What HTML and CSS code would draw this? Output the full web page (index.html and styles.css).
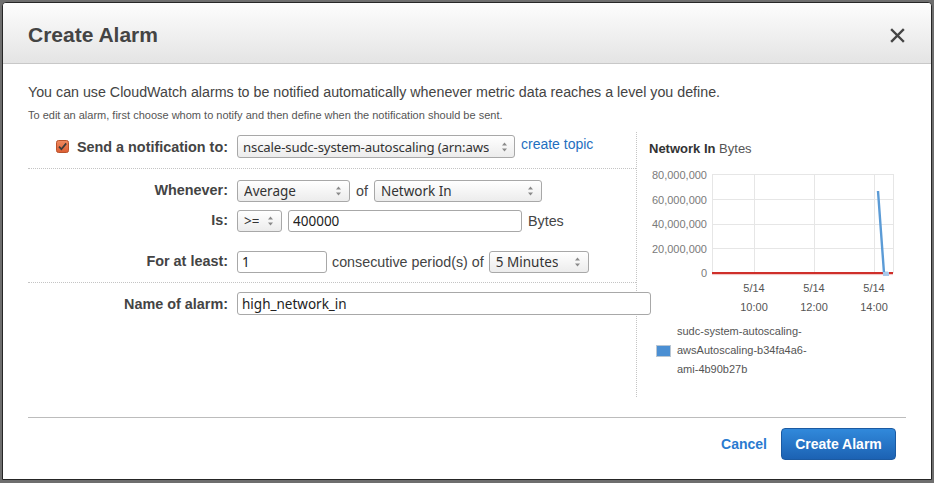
FILE: index.html
```html
<!DOCTYPE html>
<html lang="en">
<head>
<meta charset="utf-8">
<title>Create Alarm</title>
<link rel="stylesheet" href="styles.css">
</head>
<body>
<div class="modal">
  <header class="modal-header">
    <h1 class="modal-title">Create Alarm</h1>
    <button class="close" aria-label="Close">
      <svg width="15" height="15" viewBox="0 0 15 15"><path d="M2 2 L13 13 M13 2 L2 13" stroke="#444" stroke-width="2.4" stroke-linecap="square" fill="none"/></svg>
    </button>
  </header>

  <div class="modal-body">
    <p class="intro">You can use CloudWatch alarms to be notified automatically whenever metric data reaches a level you define.</p>
    <p class="hint">To edit an alarm, first choose whom to notify and then define when the notification should be sent.</p>

    <div class="editor">
      <div class="form-panel">
        <div class="row row-notify">
          <div class="label">
            <span class="checkbox">
              <svg width="13" height="13" viewBox="0 0 13 13">
                <defs><linearGradient id="cb" x1="0" y1="0" x2="0" y2="1"><stop offset="0" stop-color="#f08a5f"/><stop offset="1" stop-color="#dc5e33"/></linearGradient></defs>
                <rect x="0.5" y="0.5" width="12" height="12" rx="2" fill="url(#cb)" stroke="#b9532c"/>
                <path d="M3 6.6 L5.4 9.2 L10.2 3.4" stroke="#3b3b3b" stroke-width="1.7" fill="none"/>
              </svg>
            </span>
            <span>Send a notification to:</span>
          </div>
          <div class="controls">
            <div class="select w-topic"><span class="sel-text">nscale-sudc-system-autoscaling (arn:aws</span><svg class="spin" width="7" height="12" viewBox="0 0 7 12"><path d="M1 4.5 L3.5 1.5 L6 4.5 Z M1 7.5 L3.5 10.5 L6 7.5 Z" fill="#8a8a8a"/></svg></div>
            <a class="link" href="#">create topic</a>
          </div>
        </div>

        <div class="section section-cond">
          <div class="row">
            <div class="label lift">Whenever:</div>
            <div class="controls">
              <div class="select w-stat"><span class="sel-text">Average</span><svg class="spin" width="7" height="12" viewBox="0 0 7 12"><path d="M1 4.5 L3.5 1.5 L6 4.5 Z M1 7.5 L3.5 10.5 L6 7.5 Z" fill="#8a8a8a"/></svg></div>
              <span class="txt">of</span>
              <div class="select w-metric"><span class="sel-text">Network In</span><svg class="spin" width="7" height="12" viewBox="0 0 7 12"><path d="M1 4.5 L3.5 1.5 L6 4.5 Z M1 7.5 L3.5 10.5 L6 7.5 Z" fill="#8a8a8a"/></svg></div>
            </div>
          </div>
          <div class="row row-is">
            <div class="label lift">Is:</div>
            <div class="controls">
              <div class="select w-op"><span class="sel-text">&gt;=</span><svg class="spin" width="7" height="12" viewBox="0 0 7 12"><path d="M1 4.5 L3.5 1.5 L6 4.5 Z M1 7.5 L3.5 10.5 L6 7.5 Z" fill="#8a8a8a"/></svg></div>
              <input class="input w-threshold" type="text" value="400000">
              <span class="txt">Bytes</span>
            </div>
          </div>
          <div class="row row-period">
            <div class="label lift">For at least:</div>
            <div class="controls tight">
              <input class="input w-count" type="text" value="1">
              <span class="txt">consecutive period(s) of</span>
              <div class="select w-period"><span class="sel-text">5 Minutes</span><svg class="spin" width="7" height="12" viewBox="0 0 7 12"><path d="M1 4.5 L3.5 1.5 L6 4.5 Z M1 7.5 L3.5 10.5 L6 7.5 Z" fill="#8a8a8a"/></svg></div>
            </div>
          </div>
        </div>

        <div class="section section-name">
          <div class="row">
            <div class="label">Name of alarm:</div>
            <div class="controls">
              <input class="input w-name" type="text" value="high_network_in">
            </div>
          </div>
        </div>
      </div>

      <div class="chart-panel">
        <div class="chart-title"><b>Network In</b> <span>Bytes</span></div>
        <svg class="chart" width="270" height="160" viewBox="0 0 270 160">
          <g stroke="#e6e6e6" stroke-width="1" fill="none">
            <path d="M75 14.5 H256 M75 39.5 H256 M75 64.5 H256 M75 88.5 H256"/>
            <path d="M75.5 14 V113 M117.5 14 V113 M177.5 14 V113 M237.5 14 V113 M256.5 14 V113"/>
          </g>
          <g class="ylab" text-anchor="end">
            <text x="70" y="19">80,000,000</text>
            <text x="70" y="44">60,000,000</text>
            <text x="70" y="68">40,000,000</text>
            <text x="70" y="93">20,000,000</text>
            <text x="70" y="117">0</text>
          </g>
          <path d="M75 113 H256" stroke="#cf2f2a" stroke-width="2" fill="none"/>
          <path d="M75 113 H256" stroke="#e89a98" stroke-width="0.6" fill="none" transform="translate(0,1.6)"/>
          <polyline points="241,31 247,113 251,113" stroke="#5b9bd6" stroke-width="2.4" fill="none" stroke-linejoin="round"/>
          <rect x="246" y="112" width="6" height="4" fill="#a9c9ea"/>
          <g class="xlab" text-anchor="middle">
            <text x="117" y="132">5/14</text>
            <text x="177" y="132">5/14</text>
            <text x="237" y="132">5/14</text>
            <text x="117" y="151">10:00</text>
            <text x="177" y="151">12:00</text>
            <text x="237" y="151">14:00</text>
          </g>
        </svg>
        <div class="legend">
          <span class="swatch"></span>
          <span class="legend-text">sudc-system-autoscaling-<br>awsAutoscaling-b34fa4a6-<br>ami-4b90b27b</span>
        </div>
      </div>
    </div>
  </div>

  <footer class="modal-footer">
    <a class="cancel" href="#">Cancel</a>
    <button class="primary">Create Alarm</button>
  </footer>
</div>
</body>
</html>
```

FILE: styles.css
```css
html, body {
  margin: 0;
  height: 100%;
}

body {
  background: #6e6e6e;
  padding: 2px 2px 0 2px;
  box-sizing: border-box;
  overflow: hidden;
  font-family: "Liberation Sans", Arial, sans-serif;
  color: #444;
}

.modal {
  width: 928px;
  height: 476px;
  background: #fff;
  border: 1px solid #262626;
  border-radius: 4px 4px 0 0;
}

.modal-header {
  height: 60px;
  box-sizing: content-box;
  padding: 0 26px 0 25px;
  display: flex;
  align-items: center;
  justify-content: space-between;
  background: linear-gradient(#fdfdfd, #e4e4e4);
  border-bottom: 1px solid #c8c8c8;
  border-radius: 3px 3px 0 0;
}

.modal-title {
  margin: 0;
  padding-top: 4px;
  font-size: 21px;
  font-weight: bold;
  color: #444;
}

.close {
  border: 0;
  background: none;
  padding: 0;
  margin-top: 4px;
  width: 15px;
  height: 15px;
  display: block;
}
.close svg { display: block; }

.modal-body {
  padding: 0 25px;
}

.intro {
  margin: 18px 0 0;
  font-size: 14.25px;
  line-height: 20px;
  color: #444;
}

.hint {
  margin: 5px 0 0;
  font-size: 11px;
  line-height: 16px;
  color: #555;
}

.editor {
  display: flex;
  margin-top: 9px;
  height: 265px;
}

.form-panel {
  width: 608px;
  border-right: 1px dotted #c4c4c4;
  flex: none;
}

.row {
  display: grid;
  grid-template-columns: 200px auto;
  column-gap: 9px;
  align-items: center;
}

.row-notify {
  padding: 3px 0 10px;
  border-bottom: 1px dotted #c4c4c4;
}

.section-cond {
  padding: 11px 0 9px;
  border-bottom: 1px dotted #c4c4c4;
}

.row-is { margin-top: 8px; }
.row-period { margin-top: 19px; }

.section-name {
  padding-top: 9px;
}

.label {
  display: flex;
  justify-content: flex-end;
  align-items: center;
  gap: 8px;
  font-size: 14.4px;
  font-weight: bold;
  color: #444;
  white-space: nowrap;
}
.label.lift { padding-bottom: 3px; }

.checkbox { display: block; width: 13px; height: 13px; }
.checkbox svg { display: block; }

.controls {
  display: flex;
  align-items: center;
  gap: 6px;
}
.controls.tight { gap: 5px; }

.txt {
  font-size: 14.3px;
  color: #444;
  white-space: nowrap;
}

.link {
  font-size: 14px;
  color: #1f6fc0;
  text-decoration: none;
  align-self: flex-start;
  margin-top: 1px;
}

.select {
  height: 22px;
  box-sizing: border-box;
  border: 1px solid #a8a8a8;
  border-radius: 3px;
  background: linear-gradient(#ffffff, #ececec);
  display: flex;
  align-items: center;
  justify-content: space-between;
  padding: 0 7px 0 6px;
  font-family: "Noto Sans", "Open Sans", sans-serif;
  font-size: 13.5px;
  color: #333;
  overflow: hidden;
  white-space: nowrap;
}
.sel-text { overflow: hidden; }
.spin { flex: none; margin-left: 4px; }

.w-topic { width: 278px; height: 23px; padding: 0 6px 0 5px; }
.w-topic .sel-text { font-size: 13.2px; letter-spacing: -0.15px; }
.w-topic .spin { margin-left: 2px; }
.w-stat { width: 113px; }
.w-metric { width: 168px; }
.w-op { width: 45px; }
.w-period { width: 100px; }

.input {
  height: 22px;
  box-sizing: border-box;
  border: 1px solid #a8a8a8;
  border-radius: 3px;
  padding: 0 4px;
  margin: 0;
  background: #fff;
  font-family: "Noto Sans", "Open Sans", sans-serif;
  font-size: 13.5px;
  color: #222;
  outline: none;
}
.w-threshold { width: 234px; }
.w-count { width: 90px; }
.w-name { width: 414px; height: 23px; }

.chart-panel {
  flex: 1;
  padding: 9px 0 0 12px;
}

.chart-title {
  font-size: 13px;
  line-height: 16px;
  color: #333;
  white-space: nowrap;
}
.chart-title span { color: #555; }

.chart {
  display: block;
  margin: 3px 0 0 -12px;
}
.chart text {
  font-family: "Liberation Sans", Arial, sans-serif;
  font-size: 11px;
}
.ylab { fill: #7a7a7a; }
.xlab { fill: #555; }

.legend {
  margin: 2px 0 0 7px;
  display: flex;
  align-items: center;
  gap: 6px;
}
.swatch {
  width: 13px;
  height: 10px;
  background: #4b8fd3;
  border: 1px solid #b9c6d3;
  flex: none;
}
.legend-text {
  font-size: 11px;
  line-height: 19px;
  color: #555;
}

.modal-footer {
  margin: 20px 25px 0;
  border-top: 1px solid #bcbcbc;
  padding: 10px 10px 0 0;
  display: flex;
  justify-content: flex-end;
  align-items: center;
  gap: 14px;
}

.cancel {
  font-size: 14px;
  font-weight: bold;
  color: #2a7bd0;
  text-decoration: none;
}

.primary {
  height: 32px;
  width: 115px;
  box-sizing: border-box;
  padding: 0;
  border: 1px solid #1b5aa2;
  border-radius: 4px;
  background: linear-gradient(#3189db, #1c62b3);
  color: #fff;
  font-family: "Liberation Sans", Arial, sans-serif;
  font-size: 14px;
  font-weight: bold;
}
```
